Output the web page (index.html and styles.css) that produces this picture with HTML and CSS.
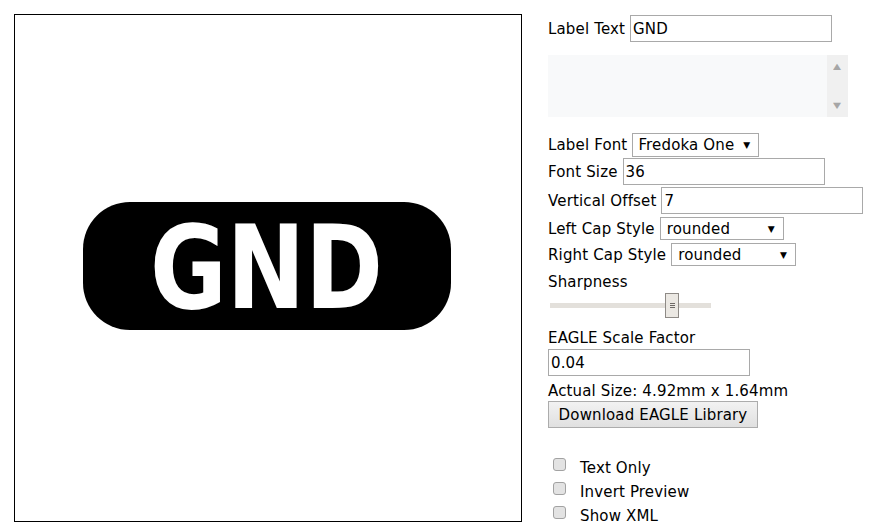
FILE: index.html
```html
<!DOCTYPE html>
<html>
<head>
<meta charset="utf-8">
<title>Label Generator</title>
<link rel="stylesheet" href="styles.css">
</head>
<body>
<main class="app">
  <div class="preview">
    <svg class="preview-svg" width="506" height="506" viewBox="0 0 506 506">
      <rect x="68" y="187" width="368" height="128" rx="47" ry="47" fill="#000"/>
      <text x="135" y="293" class="preview-text" textLength="233" lengthAdjust="spacingAndGlyphs">GND</text>
    </svg>
  </div>
  <form class="panel">
    <div class="row row-label-text">
      <label class="lbl">Label Text</label>
      <input class="txt" type="text" value="GND">
    </div>
    <div class="textarea-box">
      <textarea class="xml"></textarea>
      <div class="scrollbar"><span class="arrow">&#9650;</span><span class="arrow">&#9660;</span></div>
    </div>
    <div class="row row-font">
      <label class="lbl">Label Font</label>
      <span class="select-wrap sel-font"><select class="sel"><option>Fredoka One</option></select></span>
    </div>
    <div class="row row-size">
      <label class="lbl">Font Size</label>
      <input class="txt" type="text" value="36">
    </div>
    <div class="row row-offset">
      <label class="lbl">Vertical Offset</label>
      <input class="txt" type="text" value="7">
    </div>
    <div class="row row-left">
      <label class="lbl">Left Cap Style</label>
      <span class="select-wrap sel-cap"><select class="sel"><option>rounded</option></select></span>
    </div>
    <div class="row row-right">
      <label class="lbl">Right Cap Style</label>
      <span class="select-wrap sel-cap"><select class="sel"><option>rounded</option></select></span>
    </div>
    <div class="line sharp-label">Sharpness</div>
    <input class="slider" type="range" min="0" max="100" value="78">
    <div class="line scale-label">EAGLE Scale Factor</div>
    <input class="txt scale-input" type="text" value="0.04">
    <div class="line size-label">Actual Size: 4.92mm x 1.64mm</div>
    <div class="btn-row"><button type="button" class="btn">Download EAGLE Library</button></div>
    <div class="checks">
      <label class="check"><input type="checkbox" class="cb"><span class="cb-text">Text Only</span></label>
      <label class="check"><input type="checkbox" class="cb"><span class="cb-text">Invert Preview</span></label>
      <label class="check"><input type="checkbox" class="cb"><span class="cb-text">Show XML</span></label>
    </div>
  </form>
</main>
</body>
</html>
```
FILE: styles.css
```css
html, body {
  margin: 0;
  padding: 0;
  background: #fff;
}
body {
  font-family: "DejaVu Sans", Verdana, sans-serif;
  font-size: 15px;
  letter-spacing: 0.15px;
  color: #000;
}
.app {
  display: flex;
  align-items: flex-start;
  padding: 14px;
  gap: 26px;
}
.preview {
  border: 1px solid #000;
  width: 506px;
  height: 506px;
  flex: none;
}
.preview-svg {
  display: block;
}
.preview-text {
  fill: #fff;
  font-family: "DejaVu Sans", sans-serif;
  font-weight: bold;
  font-size: 115px;
  letter-spacing: 0;
}
.panel {
  display: flex;
  flex-direction: column;
  align-items: flex-start;
  padding-top: 1px;
  margin: 0;
}
.row {
  display: flex;
  align-items: center;
  gap: 5px;
}
.lbl {
  line-height: 18px;
  white-space: nowrap;
}
.txt {
  box-sizing: border-box;
  width: 202px;
  height: 27px;
  border: 1px solid #a9a9a9;
  padding: 0 2px;
  margin: 0;
  font-family: "DejaVu Sans", Verdana, sans-serif;
  font-size: 15px;
  letter-spacing: 0.15px;
  color: #000;
  background: #fff;
  outline: none;
}
.row-label-text { height: 27px; }
.textarea-box {
  margin-top: 13px;
  width: 300px;
  height: 62px;
  display: flex;
  background: #f8f9fa;
}
.xml {
  flex: 1;
  border: none;
  margin: 0;
  padding: 0;
  background: #f8f9fa;
  resize: none;
  outline: none;
}
.scrollbar {
  width: 21px;
  background: #f0f0f0;
  display: flex;
  flex-direction: column;
  justify-content: space-between;
  align-items: center;
  padding: 8px 0 7px;
  box-sizing: border-box;
}
.arrow {
  color: #a6a6a6;
  font-size: 8px;
  line-height: 8px;
  transform: scaleX(1.3);
}
.select-wrap {
  position: relative;
  display: inline-block;
}
.select-wrap::after {
  content: "\25BC";
  position: absolute;
  right: 9px;
  top: 50%;
  transform: translateY(-50%);
  font-size: 9px;
  color: #000;
  pointer-events: none;
}
.sel {
  -webkit-appearance: none;
  appearance: none;
  box-sizing: border-box;
  border: 1px solid #a9a9a9;
  background: #fff;
  margin: 0;
  font-family: "DejaVu Sans", Verdana, sans-serif;
  font-size: 15px;
  letter-spacing: 0.15px;
  color: #000;
  border-radius: 0;
  outline: none;
}
.sel-font .sel {
  width: 127px;
  height: 24px;
  padding: 0 0 0 5px;
}
.sel-cap .sel {
  width: 124px;
  height: 23px;
  padding: 0 0 0 6px;
}
.row-font { margin-top: 16px; height: 24px; }
.row-size { margin-top: 1px; height: 27px; }
.row-offset { margin-top: 2px; height: 27px; }
.row-left { margin-top: 3px; height: 23px; }
.row-right { margin-top: 3px; height: 23px; }
.row-right .sel { width: 125px; }
.line {
  line-height: 18px;
  white-space: nowrap;
}
.sharp-label { margin-top: 7px; }
.slider {
  -webkit-appearance: none;
  appearance: none;
  width: 161px;
  height: 25px;
  margin: 2px 0 0 2px;
  padding: 0;
  background: transparent;
}
.slider::-webkit-slider-runnable-track {
  height: 5px;
  background: #e3e0db;
  border: none;
}
.slider::-webkit-slider-thumb {
  -webkit-appearance: none;
  width: 14px;
  height: 25px;
  margin-top: -10px;
  box-sizing: border-box;
  border: 1px solid #8e8a86;
  background:
    linear-gradient(#6e6a66, #6e6a66) 4px 9px / 5px 1px no-repeat,
    linear-gradient(#6e6a66, #6e6a66) 4px 11px / 5px 1px no-repeat,
    linear-gradient(#6e6a66, #6e6a66) 4px 13px / 5px 1px no-repeat,
    #ebe8e3;
}
.scale-label { margin-top: 11px; }
.scale-input { margin-top: 2px; }
.size-label { margin-top: 6px; }
.btn-row { margin-top: 1px; }
.btn {
  box-sizing: border-box;
  height: 27px;
  min-width: 210px;
  padding: 0 9px;
  margin: 0;
  border: 1px solid #acacac;
  background: linear-gradient(#f2f2f2, #e0e0e0);
  font-family: "DejaVu Sans", Verdana, sans-serif;
  font-size: 15px;
  letter-spacing: 0.15px;
  color: #000;
  white-space: nowrap;
  border-radius: 0;
}
.checks {
  margin-top: 30px;
  display: flex;
  flex-direction: column;
}
.check {
  display: flex;
  align-items: flex-start;
  height: 24px;
}
.cb {
  -webkit-appearance: none;
  appearance: none;
  width: 13px;
  height: 13px;
  margin: 0 14px 0 5px;
  box-sizing: border-box;
  border: 1px solid #a2a2a2;
  border-radius: 3px;
  background: #e3e3e3;
}
.cb-text {
  line-height: 18px;
  margin-top: 1px;
}
```
